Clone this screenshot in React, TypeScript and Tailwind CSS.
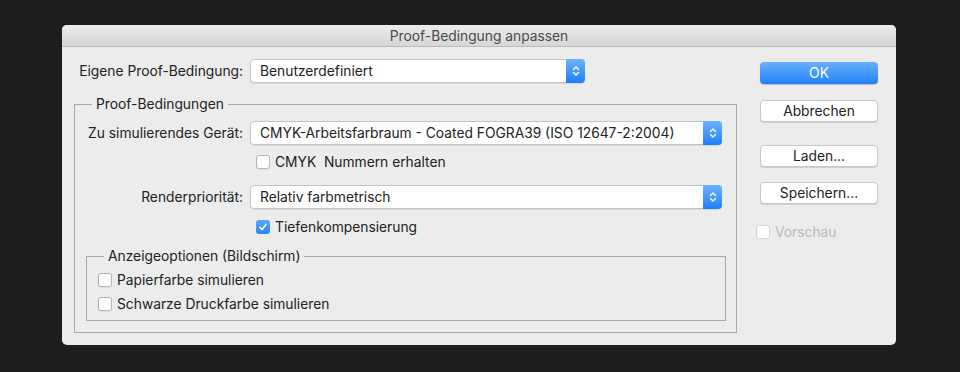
import React from 'react'

const font = { fontFamily: 'Inter, "Noto Sans", "Liberation Sans", sans-serif' }

const Chevrons = () => (
  <svg width="8" height="12" viewBox="0 0 8 12" fill="none">
    <path d="M1.5 4.5 L4 2 L6.5 4.5" stroke="white" strokeWidth="1.4" strokeLinecap="round" strokeLinejoin="round" />
    <path d="M1.5 7.5 L4 10 L6.5 7.5" stroke="white" strokeWidth="1.4" strokeLinecap="round" strokeLinejoin="round" />
  </svg>
)

const Popup = ({ value, className = '' }: { value: string; className?: string }) => (
  <div
    className={`flex h-[24px] items-stretch rounded-[4px] border border-[#c4c4c4] bg-white shadow-[0_1px_0_rgba(0,0,0,0.08)] ${className}`}
  >
    <div className="flex flex-1 items-center pl-[9px] text-[13.8px] text-[#222]">{value}</div>
    <div className="-my-px -mr-px flex w-[19px] items-center justify-center rounded-r-[4px] bg-gradient-to-b from-[#6cb3fa] to-[#1a7ef5]">
      <Chevrons />
    </div>
  </div>
)

const Check = ({ checked = false, disabled = false }: { checked?: boolean; disabled?: boolean }) =>
  checked ? (
    <div className="flex h-[14px] w-[14px] items-center justify-center rounded-[3px] bg-gradient-to-b from-[#5aa6fb] to-[#2a84f6]">
      <svg width="10" height="10" viewBox="0 0 10 10" fill="none">
        <path d="M2 5.3 L4.1 7.5 L8 2.5" stroke="white" strokeWidth="1.7" strokeLinecap="round" strokeLinejoin="round" />
      </svg>
    </div>
  ) : (
    <div
      className={`h-[14px] w-[14px] rounded-[3px] border bg-white ${
        disabled ? 'border-[#d6d6d6]' : 'border-[#b3b3b3] shadow-[0_1px_0_rgba(0,0,0,0.05)]'
      }`}
    />
  )

const CheckRow = ({
  label,
  checked,
  disabled,
  className = '',
}: {
  label: string
  checked?: boolean
  disabled?: boolean
  className?: string
}) => (
  <div className={`flex h-[14px] items-center gap-[5px] ${className}`}>
    <Check checked={checked} disabled={disabled} />
    <span className={`text-[13.8px] ${disabled ? 'text-[#b9b9b9]' : 'text-[#222]'}`}>{label}</span>
  </div>
)

const Button = ({ label, primary = false }: { label: string; primary?: boolean }) => (
  <div
    className={
      primary
        ? 'flex h-[22px] w-[118px] items-center justify-center rounded-[4px] bg-gradient-to-b from-[#68b0fc] to-[#1d80f6] text-[13.8px] text-white shadow-[0_1px_1px_rgba(0,0,0,0.2)]'
        : 'flex h-[22px] w-[118px] items-center justify-center rounded-[4px] border border-[#c8c8c8] bg-white text-[13.8px] text-[#222] shadow-[0_1px_0_rgba(0,0,0,0.12)]'
    }
  >
    {label}
  </div>
)

const Group = ({
  title,
  className = '',
  children,
}: {
  title: string
  className?: string
  children: React.ReactNode
}) => (
  <div className={`relative border border-[#a9a9a9] ${className}`}>
    <span className="absolute left-[17px] top-[-9px] bg-[#ececec] px-[4px] text-[13.8px] leading-[16px] text-[#222]">
      {title}
    </span>
    {children}
  </div>
)

export default function App() {
  return (
    <div className="h-[372px] w-[960px] bg-[#1d1d1d] pl-[62px] pt-[25px]" style={font}>
      <div className="flex h-[320px] w-[834px] flex-col overflow-hidden rounded-[5px] bg-[#ececec]">
        <div className="flex h-[22px] items-center justify-center border-b border-[#bcbcbc] bg-gradient-to-b from-[#ececec] to-[#d6d6d6] pt-px text-[13.8px] text-[#4a4a4a]">
          Proof-Bedingung anpassen
        </div>
        <div className="flex flex-1">
          <div className="flex w-[686px] flex-col pl-[12px] pt-[12px]">
            <div className="flex items-center">
              <div className="w-[169px] text-right text-[13.8px] text-[#222]">Eigene Proof-Bedingung:</div>
              <Popup value="Benutzerdefiniert" className="ml-[7px] w-[335px]" />
            </div>
            <Group title="Proof-Bedingungen" className="mt-[21px] h-[229px] w-[663px]">
              <div className="flex flex-col pt-[16px]">
                <div className="flex items-center">
                  <div className="w-[168px] text-right text-[13.8px] text-[#222]">Zu simulierendes Gerät:</div>
                  <Popup
                    value="CMYK-Arbeitsfarbraum - Coated FOGRA39 (ISO 12647-2:2004)"
                    className="ml-[7px] w-[472px]"
                  />
                </div>
                <CheckRow label="CMYK  Nummern erhalten" className="ml-[181px] mt-[10px] whitespace-pre" />
                <div className="mt-[16px] flex items-center">
                  <div className="w-[168px] text-right text-[13.8px] text-[#222]">Renderpriorität:</div>
                  <Popup value="Relativ farbmetrisch" className="ml-[7px] w-[472px]" />
                </div>
                <CheckRow label="Tiefenkompensierung" checked className="ml-[181px] mt-[11px]" />
                <Group title="Anzeigeoptionen (Bildschirm)" className="ml-[11px] mt-[22px] h-[65px] w-[640px]">
                  <div className="flex flex-col gap-[10px] pl-[11px] pt-[16px]">
                    <CheckRow label="Papierfarbe simulieren" />
                    <CheckRow label="Schwarze Druckfarbe simulieren" />
                  </div>
                </Group>
              </div>
            </Group>
          </div>
          <div className="flex flex-col pl-[12px] pt-[15px]">
            <Button label="OK" primary />
            <div className="mt-[16px]">
              <Button label="Abbrechen" />
            </div>
            <div className="mt-[23px]">
              <Button label="Laden..." />
            </div>
            <div className="mt-[15px]">
              <Button label="Speichern..." />
            </div>
            <CheckRow label="Vorschau" disabled className="-ml-[4px] mt-[21px]" />
          </div>
        </div>
      </div>
    </div>
  )
}
